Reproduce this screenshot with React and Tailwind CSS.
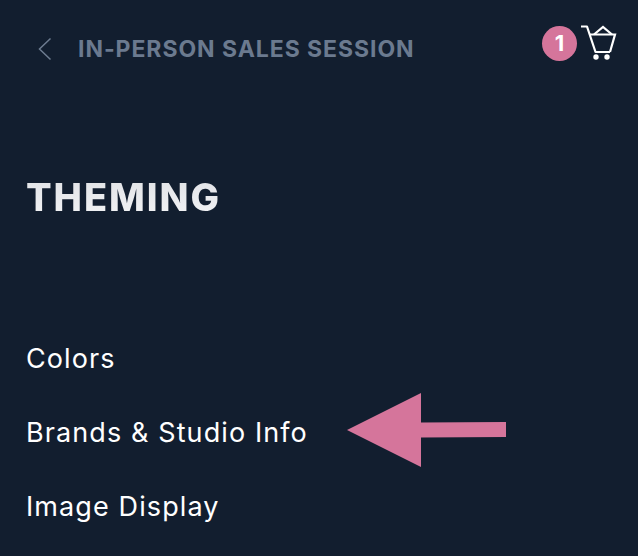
const menuItems = ["Colors", "Brands & Studio Info", "Image Display"];

function CartIcon() {
  return (
    <svg width="38" height="38" viewBox="0 0 38 38" fill="none" stroke="white" strokeWidth="2.2">
      <path d="M1 2.5h6l8.5 25.5h14.5" strokeLinejoin="round" />
      <path d="M9.5 10.5H35l-5 17.5" />
      <path d="M14 10.5l9-7.5 9 7.5" />
      <circle cx="16" cy="33" r="2.7" fill="white" stroke="none" />
      <circle cx="27" cy="33" r="2.7" fill="white" stroke="none" />
    </svg>
  );
}

export default function App() {
  return (
    <div className="relative h-[556px] w-[638px] overflow-hidden bg-[#121e2f] font-['Inter',sans-serif]">
      <header className="flex h-[98px] items-start justify-between pl-[38px] pr-[20px] pt-[25px]">
        <div className="flex h-12 items-center">
          <svg width="14" height="24" viewBox="0 0 14 24" fill="none" stroke="#6d7c90" strokeWidth="1.5">
            <path d="M12.5 1.5L1.5 12l11 10.5" />
          </svg>
          <h2 className="ml-[26px] mt-[1px] text-[23px] font-bold tracking-[0.95px] text-[#6b7a8f]">IN-PERSON SALES SESSION</h2>
        </div>
        <div className="flex items-start">
          <span className="mt-[1px] flex h-[35px] w-[35px] items-center justify-center rounded-full bg-[#d5759b] text-[22px] font-bold text-white">
            1
          </span>
          <span className="ml-[3px] -mt-[1px]">
            <CartIcon />
          </span>
        </div>
      </header>

      <h1 className="mt-[76px] bg-linear-to-b from-[#dfe1e5] to-[#f3f4f6] bg-clip-text pl-[26px] text-[38px] font-extrabold leading-[46px] tracking-[1.9px] text-transparent">THEMING</h1>

      <ul className="mt-[123px] flex flex-col gap-[42px] pl-[26px] text-[27px] leading-8 tracking-[1.1px] text-white">
        {menuItems.map((item) => (
          <li key={item}>{item}</li>
        ))}
      </ul>

      {/* annotation arrow over the list */}
      <svg className="absolute left-[346px] top-[392px]" width="160" height="76" viewBox="0 0 160 76">
        <path d="M1 38L75 1v29.5l85-.5v15l-85 .5V75z" fill="#d5759b" />
      </svg>
    </div>
  );
}
